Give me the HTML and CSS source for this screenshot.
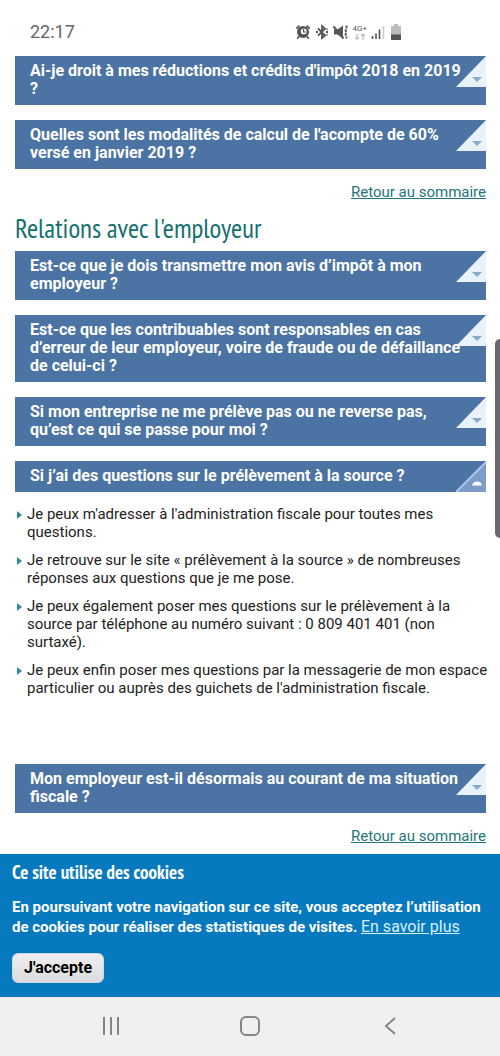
FILE: index.html
```html
<!DOCTYPE html>
<html lang="fr">
<head>
<meta charset="utf-8">
<meta name="viewport" content="width=device-width, initial-scale=1">
<title>Prélèvement à la source</title>
<link rel="stylesheet" href="styles.css">
</head>
<body>
<div class="screen">
  <header class="status">
    <time class="clock">22:17</time>
    <div class="status-icons">
      <svg width="16" height="16" viewBox="0 0 16 16" aria-hidden="true">
        <circle cx="8" cy="8" r="6" fill="#555"/>
        <path d="M1.3 4.6 4.4 1.6M14.7 4.6 11.6 1.6M4 12.5 2.2 14.6M12 12.5l1.8 2.1" stroke="#555" stroke-width="1.8"/>
        <circle cx="8.800" cy="7.400" r="2.900" fill="#fff"/>
        <path d="M8.6 5v3h2.4" fill="none" stroke="#555" stroke-width="1.2"/>
      </svg>
      <svg width="14" height="16" viewBox="0 0 14 16" aria-hidden="true">
        <path d="M3 4.5l7 7L7 14V2l3 2.7-7 7" fill="none" stroke="#555" stroke-width="1.8"/>
        <path d="M1 8h2M11 8h2M11.5 5.5l1-.6M11.5 10.5l1 .6" stroke="#555" stroke-width="1.8"/>
      </svg>
      <svg width="16" height="16" viewBox="0 0 16 16" aria-hidden="true">
        <path d="M1 5.500h3.500L10 1.500v13l-5.500-4H1z" fill="#555"/>
        <path d="M.5 2.500 10.500 14.500" stroke="#555" stroke-width="2"/>
        <path d="M13.500 1.500v3l-1 2 1 2-1 2 1 2v2" fill="none" stroke="#555" stroke-width="1.800" stroke-dasharray="3 1"/>
      </svg>
      <span class="network">4G+
        <svg width="12" height="7" viewBox="0 0 12 7" aria-hidden="true">
          <path d="M3 1v5M1.200 4.300 3 6.200l1.800-1.900M9 7V1M7 3 9 1l2 2" fill="none" stroke="#bbb" stroke-width="1.200"/>
        </svg>
      </span>
      <svg width="14" height="14" viewBox="0 0 14 14" aria-hidden="true">
        <path d="M1.500 11v3M5 8.500V14M8.500 4.500V14" stroke="#555" stroke-width="1.600"/>
        <path d="M12.500 1v13" stroke="#ccc" stroke-width="1.600"/>
      </svg>
      <svg class="battery" width="10" height="16" viewBox="0 0 10 16" aria-hidden="true">
        <path d="M3 0h4v2h3v9H0V2h3z" fill="#bbb"/><path d="M0 10.500h10V16H0z" fill="#555"/>
      </svg>
    </div>
  </header>

  <main class="content">
    <section class="topic">
      <button class="question" type="button">Ai-je droit à mes réductions et crédits d'impôt 2018 en 2019<br>?<svg class="corner" viewBox="0 0 30 31" aria-hidden="true"><path class="fold" d="M30 0v31H0z"/><path class="arrow" d="M16 21h10l-5 5z"/></svg></button>
      <button class="question" type="button">Quelles sont les modalités de calcul de l'acompte de 60%<br>versé en janvier 2019 ?<svg class="corner" viewBox="0 0 30 31" aria-hidden="true"><path class="fold" d="M30 0v31H0z"/><path class="arrow" d="M16 21h10l-5 5z"/></svg></button>
      <a class="back" href="#sommaire">Retour au sommaire</a>
    </section>

    <section class="topic">
      <h2 class="topic-title">Relations avec l'employeur</h2>
      <button class="question" type="button">Est-ce que je dois transmettre mon avis d’impôt à mon<br>employeur ?<svg class="corner" viewBox="0 0 30 31" aria-hidden="true"><path class="fold" d="M30 0v31H0z"/><path class="arrow" d="M16 21h10l-5 5z"/></svg></button>
      <button class="question" type="button">Est-ce que les contribuables sont responsables en cas<br>d’erreur de leur employeur, voire de fraude ou de défaillance<br>de celui-ci ?<svg class="corner" viewBox="0 0 30 31" aria-hidden="true"><path class="fold" d="M30 0v31H0z"/><path class="arrow" d="M16 21h10l-5 5z"/></svg></button>
      <button class="question" type="button">Si mon entreprise ne me prélève pas ou ne reverse pas,<br>qu’est ce qui se passe pour moi ?<svg class="corner" viewBox="0 0 30 31" aria-hidden="true"><path class="fold" d="M30 0v31H0z"/><path class="arrow" d="M16 21h10l-5 5z"/></svg></button>
      <button class="question expanded" type="button" aria-expanded="true">Si j’ai des questions sur le prélèvement à la source ?<svg class="corner open" viewBox="0 0 30 31" aria-hidden="true"><path class="fold" d="M30 0v31H0z"/><path class="edge" d="M0 31 30 1"/><path class="arrow" d="M16 24.500h10q-1-4-5-4t-5 4z"/></svg></button>
      <ul class="answer">
        <li>Je peux m'adresser à l'administration fiscale pour toutes mes<br>questions.</li>
        <li>Je retrouve sur le site « prélèvement à la source » de nombreuses<br>réponses aux questions que je me pose.</li>
        <li>Je peux également poser mes questions sur le prélèvement à la<br>source par téléphone au numéro suivant : 0 809 401 401 (non<br>surtaxé).</li>
        <li>Je peux enfin poser mes questions par la messagerie de mon espace<br>particulier ou auprès des guichets de l'administration fiscale.</li>
      </ul>
      <button class="question" type="button">Mon employeur est-il désormais au courant de ma situation<br>fiscale ?<svg class="corner" viewBox="0 0 30 31" aria-hidden="true"><path class="fold" d="M30 0v31H0z"/><path class="arrow" d="M16 21h10l-5 5z"/></svg></button>
      <a class="back" href="#sommaire">Retour au sommaire</a>
    </section>
  </main>

  <section class="cookies">
    <h2 class="cookies-title">Ce site utilise des cookies</h2>
    <p class="cookies-text">En poursuivant votre navigation sur ce site, vous acceptez l’utilisation<br>de cookies pour réaliser des statistiques de visites. <a class="more" href="#cookies">En savoir plus</a></p>
    <button class="accept" type="button">J'accepte</button>
  </section>

  <nav class="system-nav">
    <button class="nav-button" type="button" aria-label="Applications récentes"><svg width="20" height="20" viewBox="0 0 20 20"><path d="M3 1v18M10 1v18M17 1v18"/></svg></button>
    <button class="nav-button" type="button" aria-label="Accueil"><svg width="20" height="20" viewBox="0 0 20 20"><rect x="1" y="1" width="18" height="18" rx="5"/></svg></button>
    <button class="nav-button" type="button" aria-label="Retour"><svg width="20" height="20" viewBox="0 0 20 20"><path d="M16 2 7 10l9 8"/></svg></button>
  </nav>
  <div class="edge-handle"></div>
</div>
</body>
</html>
```

FILE: styles.css
```css
* { box-sizing: border-box; }
body {
  margin: 0;
  background: #fff;
  color: #222;
  font-family: Roboto, "Liberation Sans", sans-serif;
}
button { font-family: inherit; cursor: pointer; }
.screen {
  position: relative;
  display: flex;
  flex-direction: column;
  min-height: 100vh;
}
.status {
  display: flex;
  align-items: center;
  justify-content: space-between;
  padding: 20px 99px 12px 30px;
}
.clock { color: #666; font-size: 18px; line-height: 24px; }
.status-icons { display: flex; align-items: center; gap: 4px; }
.network {
  display: flex;
  flex-direction: column;
  align-items: center;
  color: #555;
  font-size: 8px;
  line-height: 8px;
}
.battery { margin-left: 2px; }
.content { padding: 0 14px 0 15px; }
.topic { display: flex; flex-direction: column; }
.question {
  position: relative;
  z-index: 0;
  margin: 0 0 15px;
  padding: 6px 15px 7px;
  border: 0;
  background: #4b74a4;
  color: #fff;
  font-size: 16px;
  font-weight: 700;
  line-height: 18px;
  text-align: left;
  white-space: nowrap;
}
.corner {
  position: absolute;
  top: 0;
  right: 0;
  z-index: -1;
  width: 30px;
  height: 31px;
}
.expanded { margin-bottom: 13px; }
.fold { fill: #e9f1fb; }
.arrow { fill: #8aa8cc; }
.open .fold { fill: #7b9dc8; }
.open .arrow { fill: #fff; }
.edge { stroke: #a9c6e6; stroke-width: 2; }
.back {
  align-self: flex-end;
  margin: -1px 0 9px;
  color: #23757b;
  font-size: 15px;
  line-height: 18px;
}
.topic-title {
  margin: 0 0 5px;
  color: #14706f;
  font-family: "PT Sans Narrow", "Liberation Sans Narrow", "Open Sans", sans-serif;
  font-size: 27px;
  font-weight: 400;
  line-height: 36px;
}
.answer {
  display: flex;
  flex-direction: column;
  gap: 10px;
  margin: 0 0 67px;
  padding: 0;
  list-style: none;
  font-size: 15px;
  line-height: 18px;
  white-space: nowrap;
}
.answer li { position: relative; padding-left: 12px; }
.answer li::before {
  content: "";
  position: absolute;
  left: 2px;
  top: 6px;
  border-left: 5px solid #2b8c96;
  border-top: 4px solid transparent;
  border-bottom: 4px solid transparent;
}
.cookies { flex: 1; padding: 5px 12px 14px; background: #0779bf; color: #fff; }
.cookies-title {
  margin: 0 0 13px;
  font-family: "PT Sans Narrow", "Liberation Sans Narrow", "Open Sans", sans-serif;
  font-size: 19px;
  line-height: 26px;
}
.cookies-text {
  margin: 0 0 16px;
  font-size: 15px;
  font-weight: 700;
  line-height: 19px;
  white-space: nowrap;
}
.more { color: #d5f0ff; font-size: 16px; font-weight: 400; }
.accept {
  display: block;
  padding: 5px 11px;
  border: 1px solid #ccd8e0;
  border-radius: 6px;
  background: linear-gradient(#eee, #dcdcdc);
  color: #000;
  font-size: 16px;
  font-weight: 700;
  line-height: 18px;
}
.system-nav {
  display: flex;
  justify-content: space-around;
  padding: 14px 41px 15px;
  background: #f0f0f0;
}
.nav-button { display: flex; padding: 5px; border: 0; background: none; }
.nav-button svg { fill: none; stroke: #858585; stroke-width: 2; }
.edge-handle {
  position: absolute;
  top: 339px;
  right: 0;
  width: 5px;
  height: 199px;
  border-radius: 5px 0 0 5px;
  background: #6c6872;
}
```
